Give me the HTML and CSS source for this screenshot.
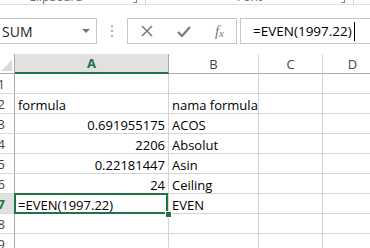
FILE: index.html
```html
<!DOCTYPE html>
<html lang="en">
<head>
  <meta charset="UTF-8">
  <title>Book1 - Excel</title>
  <link rel="stylesheet" href="styles.css">
</head>
<body>
  <div class="ribbon">
    <div class="group g-clip"><span class="glabel">Clipboard</span><span class="launch"></span></div>
    <div class="group g-font"><span class="glabel">Font</span><span class="launch"></span></div>
  </div>

  <div class="fbar">
    <div class="namebox">
      <span>SUM</span>
      <span class="dd"></span>
    </div>
    <div class="dots"><i></i><i></i><i></i></div>
    <div class="btns">
      <svg width="12" height="12" viewBox="0 0 12 12"><path d="M1 1 L11 11 M11 1 L1 11" stroke="#7a7a7a" stroke-width="1.6" fill="none"/></svg>
      <svg width="14" height="11" viewBox="0 0 14 11"><path d="M1 6 L5 10 L13 1" stroke="#7a7a7a" stroke-width="2.2" fill="none"/></svg>
      <span class="fx">f<sub>x</sub></span>
    </div>
    <div class="finput">=EVEN(1997.22)<span class="caret"></span></div>
  </div>

  <div class="sheet">
    <div class="corner"><span class="tri"></span></div>
    <div class="colh sel">A</div>
    <div class="colh">B</div>
    <div class="colh">C</div>
    <div class="colh">D</div>

    <div class="rowh">1</div><div class="c"></div><div class="c"></div><div class="c"></div><div class="c"></div>
    <div class="rowh">2</div><div class="c">formula</div><div class="c">nama formula</div><div class="c"></div><div class="c"></div>
    <div class="rowh">3</div><div class="c num">0.691955175</div><div class="c">ACOS</div><div class="c"></div><div class="c"></div>
    <div class="rowh">4</div><div class="c num">2206</div><div class="c">Absolut</div><div class="c"></div><div class="c"></div>
    <div class="rowh">5</div><div class="c num">0.22181447</div><div class="c">Asin</div><div class="c"></div><div class="c"></div>
    <div class="rowh">6</div><div class="c num">24</div><div class="c">Ceiling</div><div class="c"></div><div class="c"></div>
    <div class="rowh sel">7</div><div class="c active">=EVEN(1997.22)</div><div class="c">EVEN</div><div class="c"></div><div class="c"></div>
    <div class="rowh">8</div><div class="c"></div><div class="c"></div><div class="c"></div><div class="c"></div>
    <div class="rowh">9</div><div class="c"></div><div class="c"></div><div class="c"></div><div class="c"></div>
  </div>
</body>
</html>
```

FILE: styles.css
```css
* {
  margin: 0;
  padding: 0;
  box-sizing: border-box;
}
body {
  font-family: "Open Sans", sans-serif;
  font-size: 13px;
  background: #fff;
  color: #000;
  width: 370px;
  height: 248px;
  overflow: hidden;
}

/* ribbon strip, only its bottom edge shows */
.ribbon {
  height: 5px;
  display: flex;
  border-bottom: 1px solid #e1e1e1;
  overflow: hidden;
}
.group {
  position: relative;
  display: flex;
  justify-content: center;
  border-right: 1px solid #d4d4d4;
}
.g-clip {
  width: 146px;
}
.g-font {
  width: 208px;
}
.glabel {
  font-size: 12px;
  color: #666;
  line-height: 12px;
  margin-top: -9px;
}
.g-clip .glabel {
  margin-right: 34px;
}
.launch {
  position: absolute;
  right: 8px;
  top: 0;
  width: 4px;
  height: 3px;
  border-right: 1px solid #888;
  border-bottom: 1px solid #888;
}

/* formula bar */
.fbar {
  display: flex;
  align-items: stretch;
  padding: 13px 0 10px;
  height: 49px;
}
.namebox {
  margin-left: -6px;
  width: 103px;
  border: 1px solid #c6c6c6;
  display: flex;
  align-items: center;
  justify-content: space-between;
  padding: 0 6px 0 7px;
  font-size: 14px;
  color: #222;
}
.dd {
  width: 0;
  height: 0;
  border-left: 4px solid transparent;
  border-right: 4px solid transparent;
  border-top: 4px solid #777;
}
.dots {
  width: 30px;
  display: flex;
  flex-direction: column;
  align-items: center;
  justify-content: center;
  gap: 3px;
}
.dots i {
  width: 2px;
  height: 2px;
  background: #b0b0b0;
}
.btns {
  width: 110px;
  border: 1px solid #c6c6c6;
  display: flex;
  align-items: center;
  justify-content: space-between;
  padding: 0 12px 0 13px;
}
.fx {
  font-family: "Liberation Serif", serif;
  font-style: italic;
  font-size: 15px;
  color: #7a7a7a;
  line-height: 1;
}
.fx sub {
  font-size: 11px;
  vertical-align: -1px;
}
.finput {
  flex: 1;
  margin-left: 3px;
  margin-right: -10px;
  border: 1px solid #c6c6c6;
  display: flex;
  align-items: center;
  padding-left: 12px;
  font-size: 13.5px;
}
.caret {
  width: 1px;
  height: 19px;
  background: #000;
  margin-left: 2px;
}

/* grid */
.sheet {
  display: grid;
  grid-template-columns: 15px 154px 90px 64px 60px;
  grid-auto-rows: 20px;
}
.corner {
  position: relative;
  border-right: 1px solid #ababab;
  border-bottom: 1px solid #ababab;
}
.tri {
  position: absolute;
  right: 2px;
  bottom: 2px;
  width: 0;
  height: 0;
  border-left: 11px solid transparent;
  border-bottom: 11px solid #dadada;
}
.colh {
  display: flex;
  align-items: center;
  justify-content: center;
  font-size: 13px;
  color: #444;
  border-right: 1px solid #dadada;
  border-bottom: 1px solid #ababab;
}
.colh.sel {
  background: #e1e1e1;
  color: #217346;
  font-weight: bold;
  border-right-color: #ababab;
  border-bottom: 2px solid #217346;
}
.rowh {
  display: flex;
  justify-content: flex-end;
  align-items: center;
  padding-right: 9px;
  color: #444;
  border-right: 1px solid #ababab;
  border-bottom: 1px solid #dadada;
}
.rowh.sel {
  background: #e1e1e1;
  color: #217346;
  font-weight: bold;
}
.c {
  display: flex;
  align-items: flex-end;
  padding: 0 3px;
  line-height: 16px;
  white-space: nowrap;
  border-right: 1px solid #d4d4d4;
  border-bottom: 1px solid #d4d4d4;
}
.c.num {
  justify-content: flex-end;
}
.c.active {
  position: relative;
}
.c.active::after {
  content: "";
  position: absolute;
  left: -1px;
  right: 0;
  top: -1px;
  bottom: -1px;
  border: 2px solid #217346;
}
.c.active::before {
  content: "";
  position: absolute;
  right: -3px;
  bottom: -4px;
  width: 5px;
  height: 5px;
  background: #217346;
  outline: 1px solid #fff;
  z-index: 1;
}
```
